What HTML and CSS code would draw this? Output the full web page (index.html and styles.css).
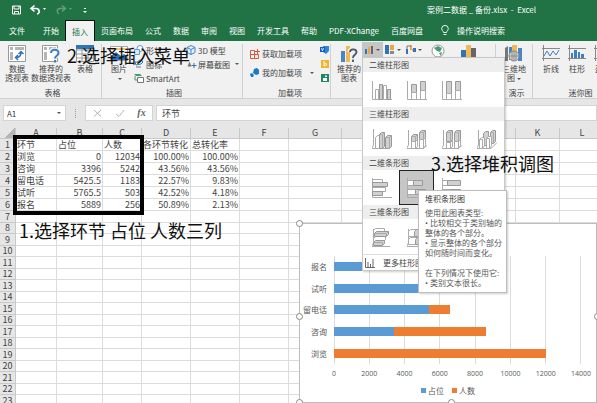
FILE: index.html
```html
<!DOCTYPE html>
<html lang="zh-CN">
<head>
<meta charset="utf-8">
<title>案例二数据 _ 备份.xlsx - Excel</title>
<link rel="stylesheet" href="styles.css">
</head>
<body>
<svg class="defs" aria-hidden="true">
  <symbol id="col-cluster" viewBox="0 0 20 20"><path class="ax" d="M.5 1v18.500H20"/><path class="w" d="M3.500 9.500h3v10h-3zM11.500 5.500h3v14h-3z"/><path class="g" d="M7.500 4.500h3v15h-3zM15.500 9.500h3v10h-3z"/></symbol>
  <symbol id="col-stack" viewBox="0 0 20 20"><path class="ax" d="M.5 1v18.500H20"/><path class="g" d="M4.500 4.500h5v8h-5zM13.500 1.500h5v9h-5z"/><path class="w" d="M4.500 12.500h5v7h-5zM13.500 10.500h5v9h-5z"/></symbol>
  <symbol id="col-full" viewBox="0 0 20 20"><path class="ax" d="M.5 1v18.500H20"/><path class="g" d="M4.500 1.500h5v12h-5zM13.500 1.500h5v9h-5z"/><path class="w" d="M4.500 13.500h5v6h-5zM13.500 10.500h5v9h-5z"/></symbol>
  <symbol id="col3-cluster" viewBox="0 0 20 20"><path class="ax" d="M1.500 0v16l-2 3.500H15l4-3"/><path class="w" d="M3.500 8.500l2-2h3v11l-2 2h-3z"/><path class="g" d="M7.500 5.500l2-2h3v14l-2 2h-3zM13.500 8.500l2-2h4v11l-2 2h-4z"/><path class="ax" d="M7.500 5.500h3v14M10.500 5.500l2-2M13.500 8.500h4v11M17.500 8.500l2-2"/></symbol>
  <symbol id="col3-stack" viewBox="0 0 20 20"><path class="ax" d="M1.500 1v15l-2 3.500H16l4-3"/><path class="g" d="M4.500 7.500l2-2h4v5l-2 2h-4zM12.500 3.500l2-2h4v7l-2 2h-4z"/><path class="w" d="M4.500 12.500h4l2-2v7l-2 2h-4zM12.500 10.500h4l2-2v8l-2 3h-4z"/><path class="ax" d="M4.500 7.500h4v12M8.500 7.500l2-2M12.500 3.500h4v16M16.500 3.500l2-2"/></symbol>
  <symbol id="col3-full" viewBox="0 0 20 20"><path class="ax" d="M1.500 1v15l-2 3.500H16l4-3"/><path class="g" d="M4.500 3.500l2-2h4v9l-2 2h-4zM12.500 3.500l2-2h4v9l-2 2h-4z"/><path class="w" d="M4.500 13.500h4l2-2v6l-2 2h-4zM12.500 12.500h4l2-2v6l-2 3h-4z"/><path class="ax" d="M4.500 3.500h4v16M8.500 3.500l2-2M12.500 3.500h4v16M16.500 3.500l2-2"/></symbol>
  <symbol id="col3-depth" viewBox="0 0 20 20"><path class="ax" d="M1.500 1v15l-2 3.500H14l6-6"/><path class="g" d="M6.500 4.500l2-2h3v12l-2 2h-3zM13.500 3.500l2-2h3v11l-2 2h-3z"/><path class="w" d="M2.500 10.500l2-2h3v8l-2 3h-3zM9.500 9.500l2-2h3v9l-2 3h-3z"/><path class="ax" d="M2.500 10.500h3v9M9.500 9.500h3v10M13.500 3.500h3v11"/></symbol>
  <symbol id="bar-cluster" viewBox="0 0 20 20"><path class="ax" d="M.5 0v19.500H20"/><path class="w" d="M.5 1.500h10v3H.5zM.5 9.500h13v4H.5z"/><path class="g" d="M.5 4.500h15v4H.5zM.5 13.500h10v4H.5z"/></symbol>
  <symbol id="bar-stack" viewBox="0 0 20 20"><path class="ax" d="M.5 0v19.500H20"/><path class="w" d="M.5 2.500h6v5h-6zM.5 11.500h8v5h-8z"/><path class="g" d="M6.500 2.500h9v5h-9zM8.500 11.500h10v5h-10z"/></symbol>
  <symbol id="bar-full" viewBox="0 0 20 20"><path class="ax" d="M.5 0v19.500H20"/><path class="w" d="M.5 2.500h5v5h-5zM.5 11.500h8v5h-8z"/><path class="g" d="M5.500 2.500h13v5h-13zM8.500 11.500h10v5h-10z"/></symbol>
  <symbol id="bar3-cluster" viewBox="0 0 20 20"><path class="ax" d="M1.500 2v14l-2 3.500H18"/><path class="w" d="M1.500 3.500l2-2h9v3l-2 2h-9zM1.500 11.500l2-2h10v3l-2 2h-10z"/><path class="g" d="M2.500 6.500l2-2h12v3l-2 2h-12zM1.500 15.500l2-2h9v3l-2 2h-9z"/><path class="ax" d="M2.500 6.500h12v3M14.500 6.500l2-2M1.500 15.500h9v3"/></symbol>
  <symbol id="bar3-stack" viewBox="0 0 20 20"><path class="ax" d="M1.500 2v14l-2 3.500H18"/><path class="w" d="M1.500 4.500l2-2h6v5l-2 2h-6zM1.500 12.500l2-2h7v4l-2 3h-7z"/><path class="g" d="M7.500 4.500l2-2h9v4l-2 3h-9zM8.500 12.500l2-2h9v4l-2 3h-9z"/></symbol>
</svg>

<header class="titlebar">
  <div class="quick">
    <button aria-label="保存"><svg width="9" height="10" viewBox="0 0 9 10"><path d="M.5 1h8v8h-8zM2 1v3h5V1M2.500 9V6.500h4V9" fill="none" stroke="#fff"/></svg></button>
    <button aria-label="撤消"><svg width="18" height="10" viewBox="0 0 18 10"><path d="M4.500.5L1 3.500l3.500 3M1 3.500h5c4 0 4 5 1 5.500" fill="none" stroke="#fff" stroke-width="1.600"/><path d="M13 3h3l-1.500 2z" fill="#fff"/></svg></button>
    <button aria-label="恢复"><svg width="18" height="10" viewBox="0 0 18 10" opacity=".3"><path d="M6 .5l3.500 3-3.500 3M9.500 3.500H4C.500 3.500.500 8 3 9" fill="none" stroke="#fff" stroke-width="1.400"/><path d="M13 3h3l-1.500 2z" fill="#fff"/></svg></button>
    <button aria-label="自定义"><svg width="6" height="10" viewBox="0 0 6 10"><path d="M2 3h2v1H2zM1 6h4L3 8z" fill="#fff"/></svg></button>
  </div>
  <div class="doc">案例二数据 _ 备份.xlsx&nbsp; -&nbsp; Excel</div>
</header>

<nav class="tabs">
  <button class="file">文件</button><button class="home">开始</button><button class="active">插入</button><button>页面布局</button><button>公式</button><button>数据</button><button>审阅</button><button>视图</button><button>开发工具</button><button>帮助</button><button class="pdf">PDF-XChange</button><button>百度网盘</button>
  <button class="tell"><svg width="8" height="11" viewBox="0 0 8 11"><path d="M2.500 7.500C2.500 6 .700 5.500.700 3.700a3.300 3.300 0 0 1 6.600 0C7.300 5.500 5.500 6 5.500 7.500zM2.500 9.500h3" fill="none" stroke="#fff" stroke-width=".9"/></svg>操作说明搜索</button>
</nav>

<section class="ribbon">
  <div class="group g-table">
    <div class="tools">
      <button class="big"><svg width="20" height="19" viewBox="0 0 20 19"><path d="M1.500 1.500h17v16h-17z" fill="#fff" stroke="#999"/><path d="M3 3h3v3H3zM8 3h9v3H8zM3 8h3v8H3z" fill="#b5b5b5"/><path d="M9 13.500c4 0 5-2 5-5M11.500 10L14 7.500l2.500 2.500M11 11l-2.500 2.500L11 16" fill="none" stroke="#2f75b5" stroke-width="1.500"/></svg><span>数据<br>透视表</span></button>
      <button class="big wide"><svg width="20" height="19" viewBox="0 0 20 19"><path d="M1.500 1.500h15v16h-15z" fill="#fff" stroke="#999"/><path d="M3 3h3v3H3zM8 3h7v3H8zM3 8h3v8H3z" fill="#b5b5b5"/><path d="M9.500 9c0-5 8-4.500 8 0 0 3-3.500 3-3.500 6" fill="none" stroke="#f1f1f1" stroke-width="4"/><path d="M10 9c0-4.500 7.500-4 7.500 0 0 3-3.500 2.500-3.500 5.500M14 16v2.500" fill="none" stroke="#3b80bd" stroke-width="2"/></svg><span>推荐的<br>数据透视表</span></button>
      <button class="big"><svg width="20" height="19" viewBox="0 0 20 19"><path d="M1.500 1.500h17v16h-17zM1 6h18M1 10h18M1 14h18M7 2v16M13 2v16" fill="#fff" stroke="#999"/><path d="M1 1h18v4H1z" fill="#2f75b5"/></svg><span>表格</span></button>
    </div>
    <h2>表格</h2>
  </div>
  <div class="group g-art">
    <div class="tools">
      <button class="big"><svg width="20" height="19" viewBox="0 0 20 19"><path d="M1.500 2.500h17v14h-17z" fill="#fff" stroke="#aaa"/><path d="M2 4h16v2H2z" fill="#f0c36d"/><path d="M2 16v-4l5-4 5 4 3-2 3 2v4z" fill="#2f75b5"/></svg><span>图片<br><i class="arrow"></i></span></button>
      <div class="stack three">
        <button><svg width="10" height="10" viewBox="0 0 10 10"><circle cx="6" cy="3.500" r="3" fill="#fff" stroke="#5b9bd5"/><path d="M.5 4.500h5v5h-5z" fill="#dce9f5" stroke="#5b9bd5"/></svg>形状</button>
        <button><svg width="10" height="10" viewBox="0 0 10 10"><path d="M1 3c3 1 3-2 6-2l2 2-2 2-5 1z" fill="#fff" stroke="#2f75b5"/><path d="M2 8h5" stroke="#777"/></svg>图标</button>
        <button><svg width="10" height="10" viewBox="0 0 10 10"><path d="M0 1h6l2 2H2z" fill="#3f9a78"/><path d="M3.500 4.500h6v5h-6z" fill="#fff" stroke="#777"/><path d="M1 3v4h2" fill="none" stroke="#3f9a78"/></svg>SmartArt</button>
      </div>
      <div class="stack three">
        <button><svg width="10" height="10" viewBox="0 0 10 10"><path d="M5 .5l4 2v5l-4 2-4-2v-5zM1 2.500l4 2 4-2M5 4.500v5" fill="#e8f2fb" stroke="#3d85c6"/></svg>3D 模型</button>
        <button><svg width="10" height="10" viewBox="0 0 10 10"><path d="M1.500 7.500l2-5 2 5z" fill="#777"/><path d="M8 4v5M5.500 6.500h5" stroke="#2f75b5"/></svg>屏幕截图<i class="arrow"></i></button>
      </div>
    </div>
    <h2>插图</h2>
  </div>
  <div class="group g-add">
    <div class="tools">
      <div class="stack two">
        <button><svg width="10" height="10" viewBox="0 0 10 10"><path d="M.5 1.500h4v4h-4zM.5 5.500h4v4h-4zM4.500 5.500h4v4h-4M7.500 0v5M5 2.500h5" fill="none" stroke="#d9573f"/></svg>获取加载项</button>
        <button><svg width="10" height="10" viewBox="0 0 10 10"><path d="M4 1l3-1 2 2v4L6 7 3 5z" fill="#1979ca"/><path d="M0 6l2-1 2 2-1 2-2 0z" fill="#1979ca"/></svg>我的加载项<i class="arrow far"></i></button>
      </div>
      <div class="stack three brand">
        <button aria-label="Visio"><svg width="10" height="10" viewBox="0 0 10 10"><path d="M3 1h6v5L6 9 3 7z" fill="#2b88d8"/><path d="M0 2h5v5H0z" fill="#185abd"/><path d="M1.500 3l1 3 1-3" fill="none" stroke="#fff" stroke-width=".8"/></svg></button>
        <button aria-label="Bing"><svg width="10" height="10" viewBox="0 0 10 10"><path d="M1 1h8v8H1z" fill="#f2b32d"/><path d="M4 2v5l3-1.500L5 4" fill="none" stroke="#fff"/></svg></button>
        <button aria-label="人员"><svg width="10" height="10" viewBox="0 0 10 10"><path d="M1 1h8v8H1z" fill="#1e8a5a"/><path d="M3 5h4v3H3zM5 2.500h2v1.500H5z" fill="#fff"/></svg></button>
      </div>
    </div>
    <h2>加载项</h2>
  </div>
  <div class="group g-chart">
    <div class="tools">
      <button class="big"><svg width="20" height="19" viewBox="0 0 20 19"><path d="M2 7h4v11H2z" fill="#4a86c5"/><path d="M7 2h4v16H7z" fill="#efb95a"/><path d="M10.500 8c0-4 7-4 7 0 0 3-3.500 2.500-3.500 6" fill="none" stroke="#f1f1f1" stroke-width="4"/><path d="M11 8c0-3.500 6.500-3.500 6.500 0 0 3-3.500 2.500-3.500 6M14 15.500v2.500" fill="none" stroke="#44546a" stroke-width="1.800"/></svg><span>推荐的<br>图表</span></button>
      <div class="kinds">
        <button class="on" aria-label="柱形图"><svg width="11" height="10" viewBox="0 0 11 10"><path d="M1 4h2v5H1z" fill="#2f75b5"/><path d="M4 2h2v7H4z" fill="#efa544"/><path d="M7 1h2v8H7z" fill="#666"/></svg><i class="arrow"></i></button>
        <button aria-label="层次结构"><svg width="11" height="10" viewBox="0 0 11 10"><path d="M0 0h4v9H0z" fill="#2f75b5"/><path d="M5 0h4v5H5z" fill="#efa544"/><path d="M5 6h4v3H5z" fill="#888"/></svg><i class="arrow"></i></button>
        <button aria-label="瀑布图"><svg width="11" height="10" viewBox="0 0 11 10"><path d="M0 4h2v5H0zM7 3h3v4H7z" fill="#2f75b5"/><path d="M4 0h2v5H4z" fill="#efa544"/><path d="M1 4V1h4M6 5h3" fill="none" stroke="#777"/></svg><i class="arrow"></i></button>
      </div>
      <div class="maps">
        <button aria-label="地图"><svg width="14" height="14" viewBox="0 0 14 14"><circle cx="7" cy="7" r="6" fill="#fff" stroke="#999"/><path d="M3 4l4-2 4 2-2 4-3-1zM8 9l3-1-1 4z" fill="#4b9b76"/></svg></button>
        <button aria-label="数据透视图"><svg width="20" height="14" viewBox="0 0 20 14"><path d="M0 6h5v8H0z" fill="#2f75b5"/><path d="M5 1h5v13H5z" fill="#efb95a"/><path d="M10 4h5v10h-5z" fill="#666"/></svg></button>
      </div>
    </div>
    <h2>图表</h2>
  </div>
  <div class="group g-map">
    <div class="tools">
      <button class="big"><svg width="20" height="19" viewBox="0 0 20 19"><path d="M1 4l3-2v15H1z" fill="#777"/><path d="M5 3h3v13H5z" fill="#4a86c5"/><path d="M8 1h5v10H8z" fill="#efb95a"/><path d="M14 4h4v13h-4z" fill="#4a86c5"/><circle cx="10" cy="12" r="5" fill="#ddd" stroke="#888"/><path d="M5 12h10M10 7v10M8 7.500v9M12 7.500v9" stroke="#888" fill="none"/></svg><span>三维地<br>图<i class="arrow"></i></span></button>
    </div>
    <h2>演示</h2>
  </div>
  <div class="group g-spark">
    <div class="tools">
      <button class="big"><svg width="20" height="19" viewBox="0 0 20 19"><path d="M2.500 1v16M1 4.500h18M1 14.500h18" stroke="#888"/><path d="M3 12l3-5 3 5 3-5 3 4 3-5" fill="none" stroke="#3f7fc0"/></svg><span>折线</span></button>
      <button class="big"><svg width="20" height="19" viewBox="0 0 20 19"><path d="M2.500 1v16M1 4.500h18M1 14.500h18" stroke="#888"/><path d="M4 9h2v5H4zM7 6h3v8H7zM11 8h2v6h-2zM14 10h3v4h-3z" fill="#3f7fc0"/></svg><span>柱形</span></button>
      <button class="big"><svg width="20" height="19" viewBox="0 0 20 19"><path d="M2.500 1v16M1 4.500h18M1 14.500h18" stroke="#888"/><path d="M4 6h3v4H4zM12 6h3v4h-3z" fill="#3f7fc0"/></svg><span>盈亏</span></button>
    </div>
    <h2>迷你图</h2>
  </div>
</section>

<section class="formula">
  <div class="namebox"><input aria-label="名称框" value="A1"><i class="arrow"></i></div>
  <span class="grip"></span>
  <div class="fx">
    <button aria-label="取消"><svg width="10" height="10" viewBox="0 0 10 10"><path d="M2 2l7 6.500M9 2L2 8.500" stroke="#b5b5b5"/></svg></button>
    <button aria-label="输入"><svg width="10" height="10" viewBox="0 0 10 10"><path d="M1 6l3 2.500L9 2" fill="none" stroke="#b5b5b5"/></svg></button>
    <button class="fn" aria-label="插入函数">fx</button>
  </div>
  <input class="edit" aria-label="编辑栏" value="环节">
</section>

<main class="sheet">
  <div class="clip">
    <table>
      <colgroup><col class="c0"><col class="ca"><col class="cb"><col class="cc"><col class="cd"><col class="cd"><col class="cd"><col class="cg"><col class="ch"><col class="ch"><col class="ch"><col class="ck"><col></colgroup>
      <thead><tr><th class="corner"></th><th>A</th><th>B</th><th>C</th><th>D</th><th>E</th><th>F</th><th>G</th><th>H</th><th>I</th><th>J</th><th>K</th><th>L</th></tr></thead>
      <tbody id="rows"></tbody>
    </table>
  </div>
  <div class="picked"></div>

  <figure class="chart">
    <div class="plot">
      <div class="names"><span>报名</span><span>试听</span><span>留电话</span><span>咨询</span><span>浏览</span></div>
      <div class="area">
        <div class="bars">
          <div class="bar"><i class="s1" style="width:42.100%"></i><i class="s2" style="width:1.800%"></i></div>
          <div class="bar"><i class="s1" style="width:41.200%"></i><i class="s2" style="width:3.600%"></i></div>
          <div class="bar"><i class="s1" style="width:38.700%"></i><i class="s2" style="width:8.500%"></i></div>
          <div class="bar"><i class="s1" style="width:24.300%"></i><i class="s2" style="width:37.400%"></i></div>
          <div class="bar"><i class="s2" style="width:86%"></i></div>
        </div>
        <div class="scale"><span>0</span><span>2000</span><span>4000</span><span>6000</span><span>8000</span><span>10000</span><span>12000</span><span>14000</span></div>
      </div>
    </div>
    <figcaption><i class="s1"></i>占位<i class="s2"></i>人数</figcaption>
    <b class="h tl"></b><b class="h ml"></b><b class="h bl"></b><b class="h bm"></b><b class="h mr"></b>
  </figure>
</main>

<aside class="menu">
  <h3>二维柱形图</h3>
  <div class="opts"><button aria-label="簇状柱形图"><svg><use href="#col-cluster"/></svg></button><button aria-label="堆积柱形图"><svg><use href="#col-stack"/></svg></button><button aria-label="百分比堆积柱形图"><svg><use href="#col-full"/></svg></button></div>
  <h3>三维柱形图</h3>
  <div class="opts"><button aria-label="三维簇状柱形图"><svg><use href="#col3-cluster"/></svg></button><button aria-label="三维堆积柱形图"><svg><use href="#col3-stack"/></svg></button><button aria-label="三维百分比堆积柱形图"><svg><use href="#col3-full"/></svg></button><button aria-label="三维柱形图"><svg><use href="#col3-depth"/></svg></button></div>
  <h3>二维条形图</h3>
  <div class="opts"><button aria-label="簇状条形图"><svg><use href="#bar-cluster"/></svg></button><button class="sel" aria-label="堆积条形图"><svg><use href="#bar-stack"/></svg></button><button aria-label="百分比堆积条形图"><svg><use href="#bar-full"/></svg></button></div>
  <h3>三维条形图</h3>
  <div class="opts"><button aria-label="三维簇状条形图"><svg><use href="#bar3-cluster"/></svg></button><button aria-label="三维堆积条形图"><svg><use href="#bar3-stack"/></svg></button></div>
  <button class="more"><svg width="10" height="10" viewBox="0 0 10 10"><path d="M.5 0v9.500H10M3 9V4M5.500 9V6M8 9V1" fill="none" stroke="#666"/></svg>更多柱形图</button>
</aside>

<div class="tip" role="tooltip">
  <strong>堆积条形图</strong>
  <p>使用此图表类型:<br>• 比较相交于类别轴的<br>整体的各个部分。<br>• 显示整体的各个部分<br>如何随时间而变化。</p>
  <p>在下列情况下使用它:<br>• 类别文本很长。</p>
</div>

<div class="note n1">1.选择环节 占位 人数三列</div>
<div class="note n2">2.选择插入菜单</div>
<div class="note n3">3.选择堆积调图</div>
<script src="app.js"></script>
</body>
</html>
```
FILE: styles.css
```css
* { box-sizing: border-box; }
body {
  margin: 0;
  height: 100vh;
  display: flex;
  flex-direction: column;
  position: relative;
  overflow: hidden;
  background: #fff;
  color: #444;
  font: 8px/9px "Noto Sans CJK SC", sans-serif;
}
button, input { font: inherit; color: inherit; border: 0; padding: 0; margin: 0; background: none; min-width: 0; }
button { display: flex; align-items: center; }
svg { display: block; flex: none; overflow: visible; }
i { font-style: normal; }
h2, h3, p, figure { margin: 0; font-weight: 400; font-size: 8px; }
.defs { position: absolute; width: 0; height: 0; }
.arrow { display: inline-block; border: 2px solid transparent; border-top-color: #555; border-bottom: 0; vertical-align: middle; margin-left: 3px; }

.titlebar { flex: none; height: 20px; padding-bottom: 2px; background: #217346; color: #fff; display: flex; align-items: center; }
.quick { display: flex; gap: 8px; padding: 2px 0 0 12px; width: 427px; }
.quick button:first-child { margin-right: 1px; }
.doc { white-space: nowrap; }

.tabs { flex: none; height: 21px; background: #217346; color: #fff; display: flex; white-space: nowrap; }
.tabs button { padding: 0 6px; }
.tabs .file { padding-left: 9px; }
.tabs .home { margin-left: 6px; }
.tabs .active { color: #217346; background: #f1f1f1; border: 1px solid #111; border-bottom: 0; }
.tabs .pdf { width: 62px; justify-content: center; }
.tabs .tell { margin-left: 6px; gap: 8px; }

.ribbon { flex: none; height: 58px; background: #f1f1f1; border-bottom: 1px solid #d2d2d2; display: flex; overflow: hidden; }
.group { flex: none; display: flex; flex-direction: column; justify-content: space-between; margin-top: 3px; border-right: 1px solid #d0d0d0; white-space: nowrap; }
.group h2 { text-align: center; line-height: 10px; }
.tools { display: flex; }
.big { flex-direction: column; justify-content: flex-start; width: 26px; gap: 1px; text-align: center; }
.big.wide { width: 42px; }
.big .arrow { margin-left: 2px; }
.stack { display: flex; flex-direction: column; }
.stack button { gap: 2px; height: 14px; }
.stack.three { margin-top: -1px; }
.stack.two button { height: 19px; }
.arrow.far { margin-left: 6px; }
.g-table { width: 102px; padding-left: 4px; }
.g-art { width: 141px; padding-left: 4px; }
.g-art .stack { margin-left: 2px; width: 50px; }
.g-add { width: 88px; padding-left: 7px; }
.g-add .brand { margin-left: 6px; }
.g-chart { width: 165px; padding-left: 5px; }
.g-map { width: 37px; padding-left: 5px; }
.g-spark { width: 90px; padding-left: 5px; border: 0; }
.kinds { display: flex; margin-top: -2px; }
.kinds button { width: 21px; height: 15px; padding-left: 2px; }
.kinds .arrow { margin-left: 1px; }
.kinds .on { background: #c6c6c6; }
.maps { display: flex; gap: 16px; padding-left: 6px; align-items: flex-start; }

.formula { flex: none; height: 29px; background: #e6e6e6; display: flex; padding-top: 6px; align-items: flex-start; }
.namebox, .fx, .edit { height: 16px; background: #fff; border: 1px solid #d4d4d4; }
.namebox { width: 63px; margin-left: 3px; display: flex; align-items: center; padding: 0 4px 0 3px; color: #333; }
.namebox input { flex: 1; }
.grip { width: 1px; height: 9px; margin: 4px 9px; border-left: 1px dotted #999; }
.fx { width: 68px; display: flex; align-items: center; justify-content: space-around; }
.fn { font: italic 10px/10px "Liberation Serif", serif; font-weight: 700; color: #666; }
.edit { flex: 1; margin-left: 3px; padding-left: 5px; font-size: 9px; }

.sheet { flex: 1; position: relative; min-height: 0; }
.clip { height: 100%; overflow: hidden; }
table { table-layout: fixed; width: calc(100% + 8px); border-spacing: 0; color: #444; font: 9px/10px "Noto Sans CJK SC", sans-serif; }
.c0 { width: 16px; } .ca { width: 41px; } .cb { width: 46px; } .cc { width: 39px; } .cd { width: 49px; } .cg { width: 53px; } .ch { width: 58px; } .ck { width: 44px; }
th, td { padding: 0 1px; height: 12px; border-right: 1px solid #dcdcdc; border-bottom: 1px solid #dcdcdc; white-space: nowrap; font-weight: 400; text-align: left; }
thead th, tbody th { background: #e6e6e6; text-align: center; border-color: #c9c9c9; }
thead th { height: 11px; }
tbody .low { height: 11px; }
td.num { text-align: right; }
.corner { background: linear-gradient(135deg, #e6e6e6 60%, #b5b5b5 60%); }
.picked { position: absolute; left: 13px; top: 7px; width: 131px; height: 80px; border: 4px solid #000; }

.chart { position: absolute; left: 299px; top: 95px; right: 0; bottom: 0; background: #fff; border: 1px solid #bdbdbd; display: flex; flex-direction: column; padding: 32px 15px 0 0; color: #595959; }
.plot { display: flex; }
.names { width: 34px; padding-right: 7px; height: 108px; display: flex; flex-direction: column; text-align: right; white-space: nowrap; }
.names span { flex: 1; display: flex; align-items: center; justify-content: flex-end; }
.area { flex: 1; }
.bars { height: 108px; display: flex; flex-direction: column; background: repeating-linear-gradient(90deg, #dcdcdc 0 1px, transparent 1px calc(100% / 7)); border-right: 1px solid #dcdcdc; }
.bar { flex: 1; display: flex; align-items: center; }
.bar i { height: 9px; }
.s1 { background: #5b9bd5; }
.s2 { background: #ed7d31; }
.scale { display: flex; justify-content: space-between; margin: 5px -12px 0; font: 7px/9px "Open Sans", sans-serif; }
.scale span { width: 24px; text-align: center; }
figcaption { display: flex; align-items: center; justify-content: center; gap: 2px; margin-top: 8px; padding-left: 15px; }
figcaption i { width: 5px; height: 5px; }
figcaption .s2 { margin-left: 6px; }
.h { position: absolute; width: 7px; height: 7px; border: 1px solid #888; border-radius: 50%; background: #fff; }
.tl { left: -4px; top: -4px; } .ml { left: -4px; top: 50%; } .bl { left: -4px; bottom: -4px; } .bm { left: 50%; bottom: -4px; } .mr { right: -5px; top: 50%; }

.menu { position: absolute; left: 362px; top: 57px; width: 143px; background: #fff; border: 1px solid #c8c8c8; box-shadow: 1px 1px 2px #0003; }
.menu h3 { height: 14px; line-height: 14px; padding-left: 6px; background: #eee; color: #444; }
.opts { display: flex; height: 35px; padding-left: 1px; }
.opts button { width: 35px; height: 35px; justify-content: center; }
.opts svg { width: 20px; height: 20px; }
.opts .sel { background: #c6c6c6; border: 1px solid #222; }
.ax { fill: none; stroke: #aaa; }
.w { fill: #fff; stroke: #aaa; }
.g { fill: #d0d0d0; stroke: #999; }
.more { width: 100%; height: 16px; border-top: 1px solid #ddd; padding-left: 2px; gap: 8px; }

.tip { position: absolute; left: 418px; top: 190px; width: 89px; padding: 3px 0 4px 6px; background: #fff; border: 1px solid #bebebe; box-shadow: 1px 1px 2px #0003; color: #575757; white-space: nowrap; font-family: "Open Sans", "Noto Sans CJK SC", sans-serif; line-height: 10px; }
.tip strong { display: block; font-weight: 400; color: #333; margin-bottom: 4px; }
.tip p + p { margin-top: 10px; }

.note { position: absolute; color: #111; font: 18px/24px "Noto Sans CJK SC", sans-serif; white-space: nowrap; }
.n1 { left: 19px; top: 218px; }
.n2 { left: 67px; top: 43px; }
.n3 { left: 431px; top: 151px; }
```
FILE: app.js
```js
const data = [
  ["环节", "占位", "人数", "各环节转化", "总转化率"],
  ["浏览", "0", "12034", "100.00%", "100.00%"],
  ["咨询", "3396", "5242", "43.56%", "43.56%"],
  ["留电话", "5425.5", "1183", "22.57%", "9.83%"],
  ["试听", "5765.5", "503", "42.52%", "4.18%"],
  ["报名", "5889", "256", "50.89%", "2.13%"]
];
const body = document.getElementById("rows");
for (let r = 0; r < 23; r++) {
  const tr = body.insertRow();
  const head = document.createElement("th");
  head.textContent = r + 1;
  // Rows after the data alternate between two heights.
  if (r > 5 && r % 2 === 1) head.className = "low";
  tr.append(head);
  for (let c = 0; c < 12; c++) {
    const td = tr.insertCell();
    td.textContent = (data[r] && data[r][c]) || "";
    if (r > 0 && c > 0) td.className = "num";
    if (head.className) td.classList.add("low");
  }
}
```
